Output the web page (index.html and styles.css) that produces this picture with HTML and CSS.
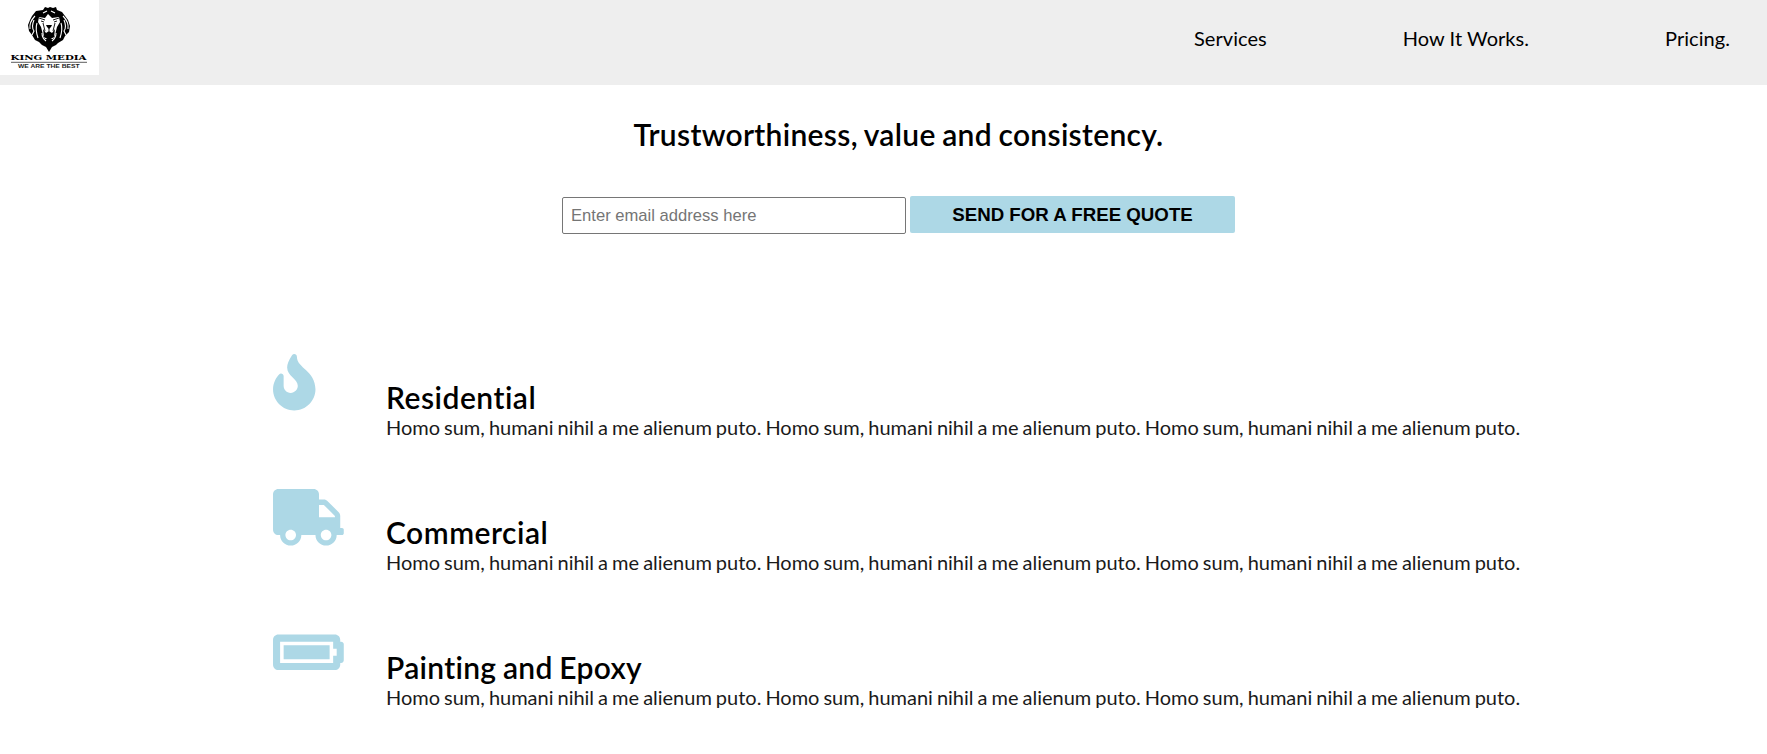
FILE: index.html
```html
<!DOCTYPE html>
<html lang="en">
<head>
<meta charset="utf-8">
<title>King Media</title>
<link rel="stylesheet" href="styles.css">
</head>
<body>
<header class="header">
  <svg class="logo" viewBox="0 0 99 75" role="img" aria-label="King Media">
    <rect width="99" height="75" fill="#fff"/>
    <path d="M43 10 45 7l3 1 2-1 3 1 3-1 1 3 5 2 3 4 3 4 2 6-1 6-4 4-2 4-5 3-2 2-4 2-3 5-3-5-4-2-3-3-4-2-3-5-3-4-1-6 2-5 2-4 4-5z"/>
    <path d="M39 17l6 1 3-4 4 4 7-1 1 5-3 5-2 8-2 4h-8l-2-4-2-8-3-5z" fill="#fff"/>
    <path d="M39 18l6 2M59 18l-6 2M41 21l3 1M57 21l-3 1M43 23l2 8M55 23l-2 8M49 27v4" stroke="#000" stroke-width=".9" fill="none"/>
    <path d="M46 25h6l-1 2-2 2-2-2zM43 29l3 4 3-2 3 2 3-4-1 8-5 3-5-3z"/>
    <path d="M35 16q-6 6-5 13M63 16q6 6 5 13M34 20q-3 7 0 11l-2 4M64 20q3 7 0 11l2 4M37 23q-2 6 1 15M61 23q2 6-1 15M42 33q0 5 4 8M56 33q0 5-4 8M43 13l4-2m8 2-4-2" fill="none" stroke="#fff" stroke-width="1.1"/>
    <text class="logo-name" x="10.5" y="59.5" textLength="76" lengthAdjust="spacingAndGlyphs">KING MEDIA</text>
    <path d="M11 62.3h76" stroke="#333" stroke-width=".8"/>
    <text class="logo-tag" x="18" y="68" textLength="61.5" lengthAdjust="spacingAndGlyphs">WE ARE THE BEST</text>
  </svg>
  <nav class="nav">
    <a href="#services">Services</a>
    <a href="#how">How It Works.</a>
    <a href="#pricing">Pricing.</a>
  </nav>
</header>
<main>
  <section class="hero">
    <h2>Trustworthiness, value and consistency.</h2>
    <form class="quote">
      <input class="email" type="email" placeholder="Enter email address here">
      <button class="send" type="button">SEND FOR A FREE QUOTE</button>
    </form>
  </section>
  <section class="services" id="services">
    <article class="service">
      <svg class="icon fire" viewBox="0 0 384 512"><path d="M216 23.86c0-23.8-30.65-32.77-44.15-13.04C48 191.85 224 200 224 288c0 35.63-29.11 64.46-64.85 63.99-35.17-.45-63.15-29.77-63.15-64.94v-85.51c0-21.7-26.47-32.23-41.43-16.5C27.8 213.16 0 261.33 0 320c0 105.87 86.13 192 192 192s192-86.13 192-192c0-170.29-168-193-168-296.14z"/></svg>
      <div class="copy"><h2 class="short">Residential</h2><p>Homo sum, humani nihil a me alienum puto. Homo sum, humani nihil a me alienum puto. Homo sum, humani nihil a me alienum puto.</p></div>
    </article>
    <article class="service">
      <svg class="icon" viewBox="0 0 640 512"><path d="M624 352h-16V243.9c0-12.7-5.1-24.9-14.1-33.9L494 110.1c-9-9-21.2-14.1-33.9-14.1H416V48c0-26.5-21.5-48-48-48H48C21.5 0 0 21.5 0 48v320c0 26.5 21.5 48 48 48h16c0 53 43 96 96 96s96-43 96-96h128c0 53 43 96 96 96s96-43 96-96h48c8.8 0 16-7.2 16-16v-32c0-8.8-7.2-16-16-16zM160 464c-26.5 0-48-21.5-48-48s21.5-48 48-48 48 21.5 48 48-21.5 48-48 48zm320 0c-26.5 0-48-21.5-48-48s21.5-48 48-48 48 21.5 48 48-21.5 48-48 48zm80-208H416V144h44.1l99.9 99.9V256z"/></svg>
      <div class="copy"><h2 class="short">Commercial</h2><p>Homo sum, humani nihil a me alienum puto. Homo sum, humani nihil a me alienum puto. Homo sum, humani nihil a me alienum puto.</p></div>
    </article>
    <article class="service">
      <svg class="icon" viewBox="0 0 640 512"><path d="M544 160v64h32v64h-32v64H64V160h480m16-64H48c-26.51 0-48 21.49-48 48v224c0 26.51 21.49 48 48 48h512c26.51 0 48-21.49 48-48v-16h8c13.255 0 24-10.745 24-24V184c0-13.255-10.745-24-24-24h-8v-16c0-26.51-21.49-48-48-48zm-48 96H96v128h416V192z"/></svg>
      <div class="copy"><h2>Painting and Epoxy</h2><p>Homo sum, humani nihil a me alienum puto. Homo sum, humani nihil a me alienum puto. Homo sum, humani nihil a me alienum puto.</p></div>
    </article>
  </section>
</main>
</body>
</html>
```
FILE: styles.css
```css
* { box-sizing: border-box; margin: 0; padding: 0; }
body { font-family: Lato, sans-serif; font-size: 20px; font-variant-ligatures: none; color: #000; background: #fff; overflow: hidden; }
.header { height: 85px; background: #eee; display: flex; justify-content: space-between; align-items: flex-start; }
.logo { width: 99px; height: 75px; }
.logo-name { font: bold 8px "DejaVu Serif", serif; }
.logo-tag { font: bold 4.8px "Liberation Sans", sans-serif; fill: #222; }
.nav { display: flex; gap: 136px; padding: 26px 37px 0 0; line-height: 24px; }
.nav a { color: #000; text-decoration: none; letter-spacing: .05px; }
h2 { font-size: 30px; font-weight: 600; line-height: 36px; letter-spacing: .3px; word-spacing: -1.2px; }
.hero { width: 701px; margin: 31px 0 0 548px; text-align: center; }
.quote { display: flex; gap: 4px; margin: 44px 0 0 14px; }
.email { width: 344px; height: 37px; margin-top: 1px; padding: 0 8px; border: 1px solid #767676; border-radius: 2px; font: 16.6px "Liberation Sans", Arial, sans-serif; }
.email::placeholder { color: #757575; }
.send { width: 325px; height: 37px; border: 0; border-radius: 2px; background: lightblue; color: #000; font: bold 18.7px "Liberation Sans", Arial, sans-serif; }
.services { margin: 120px 0 0 273px; }
.service { height: 135px; display: grid; grid-template-columns: 113px 1fr; }
.icon { width: 70.8px; height: 56.6px; fill: lightblue; }
.icon.fire { width: 42.5px; }
.copy { padding-top: 25px; white-space: nowrap; }
.copy h2.short { letter-spacing: .5px; }
.copy p { line-height: 24px; letter-spacing: -.015px; word-spacing: -1.05px; color: #1a1a1a; }
```
